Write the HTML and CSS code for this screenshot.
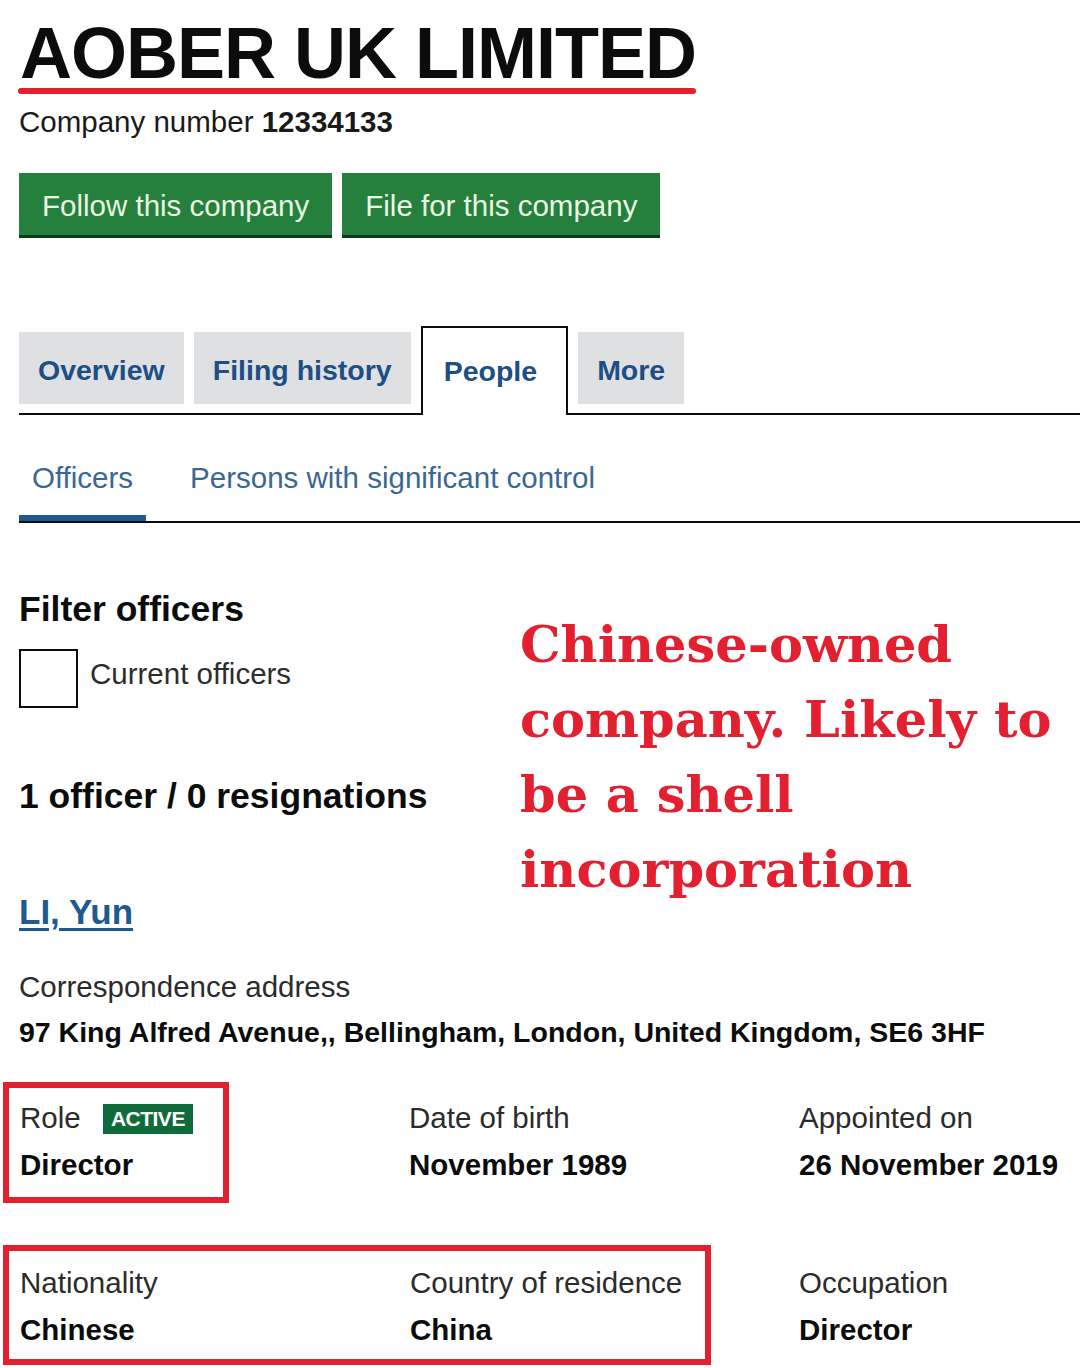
FILE: index.html
```html
<!DOCTYPE html>
<html lang="en">
<head>
  <meta charset="UTF-8" />
  <title>AOBER UK LIMITED - People</title>
  <link rel="stylesheet" href="styles.css">
</head>
<body>
  <div class="page">
    <div class="heading">
      <h1 class="company-name">AOBER UK LIMITED</h1>
      <div class="mark-line"></div>
    </div>
    <p class="company-number">Company number <strong>12334133</strong></p>

    <div class="actions">
      <a class="btn" href="#">Follow this company</a>
      <a class="btn" href="#">File for this company</a>
    </div>

    <ul class="tabs">
      <li class="tab"><a href="#">Overview</a></li>
      <li class="tab"><a href="#">Filing history</a></li>
      <li class="tab active"><a href="#">People</a></li>
      <li class="tab"><a href="#">More</a></li>
    </ul>

    <ul class="subnav">
      <li class="active"><a href="#">Officers</a></li>
      <li><a href="#">Persons with significant control</a></li>
    </ul>

    <h2 class="filter-title">Filter officers</h2>
    <label class="check">
      <span class="check-box"></span>
      <span class="check-label">Current officers</span>
    </label>

    <h2 class="count">1 officer / 0 resignations</h2>

    <a class="officer-name" href="#">LI, Yun</a>

    <p class="label">Correspondence address</p>
    <p class="value address">97 King Alfred Avenue,, Bellingham, London, United Kingdom, SE6 3HF</p>

    <div class="details">
      <div class="cell boxed">
        <p class="label">Role <span class="badge">ACTIVE</span></p>
        <p class="value">Director</p>
      </div>
      <div class="cell top1">
        <p class="label">Date of birth</p>
        <p class="value">November 1989</p>
      </div>
      <div class="cell top1">
        <p class="label">Appointed on</p>
        <p class="value">26 November 2019</p>
      </div>

      <div class="boxed wide">
        <div class="cell">
          <p class="label">Nationality</p>
          <p class="value">Chinese</p>
        </div>
        <div class="cell">
          <p class="label">Country of residence</p>
          <p class="value">China</p>
        </div>
      </div>
      <div class="cell top2">
        <p class="label">Occupation</p>
        <p class="value">Director</p>
      </div>
    </div>

    <p class="annotation">Chinese-owned<br>company. Likely to<br>be a shell<br>incorporation</p>
  </div>
</body>
</html>
```

FILE: styles.css
```css
* {
  box-sizing: border-box;
}
body {
  margin: 0;
  background: #fff;
  color: #0b0c0c;
  font-family: "Liberation Sans", Arial, sans-serif;
}
a {
  text-decoration: none;
}
p, h1, h2, ul {
  margin: 0;
  padding: 0;
}
.page {
  position: relative;
  padding: 0 0 0 19px;
}

/* heading */
.heading {
  display: inline-block;
  padding-top: 21px;
  margin-left: -1px;
}
.company-name {
  font-size: 72px;
  line-height: 64px;
  font-weight: bold;
  letter-spacing: -1px;
  padding-left: 2px;
}
.mark-line {
  height: 6px;
  margin-top: 3px;
  background: #e2202f;
  border-radius: 3px;
}
.company-number {
  margin-top: 10px;
  font-size: 29.5px;
  line-height: 36px;
  color: #1a1a1a;
}

/* buttons */
.actions {
  display: flex;
  gap: 10px;
  margin-top: 33px;
}
.btn {
  display: block;
  background: #25803e;
  color: #e9f6e2;
  font-size: 29.5px;
  line-height: 34px;
  padding: 16px 23px 12px;
  box-shadow: 0 3px 0 #0f3a1d;
}

/* tabs */
.tabs {
  list-style: none;
  display: flex;
  align-items: flex-end;
  gap: 10px;
  margin-top: 91px;
  border-bottom: 2px solid #0b0c0c;
}
.tab {
  background: #dee0e2;
  height: 72px;
  margin-bottom: 9px;
  padding: 0 19px;
}
.tab a {
  display: block;
  color: #1d4f86;
  font-size: 28.5px;
  font-weight: bold;
  line-height: 76px;
}
.tab.active {
  background: #fff;
  border: 2px solid #0b0c0c;
  border-bottom: 0;
  height: 89px;
  margin-bottom: -2px;
  padding: 5px 29px 0 21px;
}

/* sub navigation */
.subnav {
  list-style: none;
  display: flex;
  gap: 31px;
  margin-top: 35px;
  border-bottom: 2px solid #0b0c0c;
}
.subnav li {
  padding: 10px 13px 19px;
  border-bottom: 6px solid transparent;
}
.subnav li.active {
  border-bottom-color: #1d5a8f;
}
.subnav a {
  font-size: 29.5px;
  line-height: 36px;
  color: #3a6793;
}

/* filter */
.filter-title {
  margin-top: 66px;
  font-size: 35.5px;
  line-height: 40px;
}
.check {
  display: flex;
  align-items: center;
  gap: 12px;
  margin-top: 20px;
}
.check-box {
  width: 59px;
  height: 59px;
  border: 2px solid #0b0c0c;
}
.check-label {
  font-size: 29.5px;
  color: #2d2d2d;
  margin-top: -10px;
}
.count {
  margin-top: 68px;
  font-size: 35.5px;
  line-height: 40px;
}
.officer-name {
  display: inline-block;
  margin-top: 76px;
  font-size: 35px;
  line-height: 40px;
  font-weight: bold;
  color: #1d5a8f;
  text-decoration: underline;
  text-decoration-thickness: 3px;
  text-underline-offset: 4px;
}

/* officer details */
.label {
  font-size: 29.5px;
  line-height: 36px;
  color: #2b2b2b;
}
.value {
  font-size: 29.5px;
  line-height: 36px;
  font-weight: bold;
  margin-top: 11px;
}
.officer-name + .label {
  margin-top: 37px;
}
.address {
  margin-top: 9px;
  font-size: 28.5px;
}
.details {
  display: grid;
  grid-template-columns: 390px 390px 1fr;
  row-gap: 42px;
  margin-top: 32px;
  align-items: start;
}
.boxed {
  border: 6px solid #e2202f;
  margin-left: -16px;
  padding: 12px 0 14px 11px;
  width: 226px;
}
.boxed.wide {
  grid-column: 1 / 3;
  width: 708px;
  display: grid;
  grid-template-columns: 390px 1fr;
  padding: 14px 0 11px 11px;
}
.top1 {
  padding-top: 18px;
}
.top2 {
  padding-top: 20px;
}
.badge {
  display: inline-block;
  vertical-align: 2px;
  margin-left: 14px;
  background: #0f6b3a;
  color: #fff;
  font-size: 21px;
  font-weight: bold;
  line-height: 30px;
  padding: 0 8px;
  letter-spacing: -0.5px;
}

/* red note laid over the page */
.annotation {
  position: absolute;
  left: 520px;
  top: 607px;
  font-family: "DejaVu Serif", serif;
  font-weight: bold;
  font-size: 51px;
  line-height: 75px;
  color: #e2202f;
  white-space: nowrap;
}
```
